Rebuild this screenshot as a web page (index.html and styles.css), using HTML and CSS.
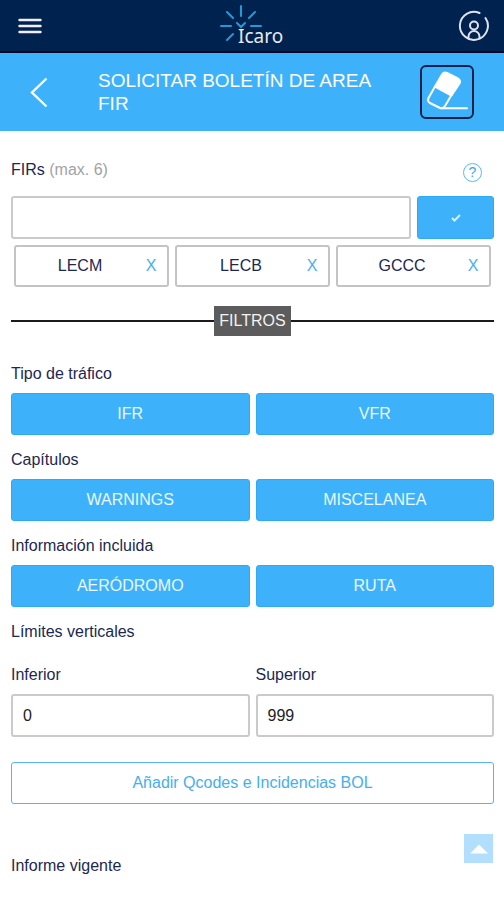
FILE: index.html
```html
<!DOCTYPE html>
<html lang="es">
<head>
<meta charset="utf-8">
<meta name="viewport" content="width=device-width, initial-scale=1">
<title>Icaro</title>
<link rel="stylesheet" href="styles.css">
</head>
<body>
<header class="topbar">
  <button class="icon-button" type="button" aria-label="Menú">
    <svg width="24" height="18" viewBox="0 0 24 18" fill="none" stroke="#f1edfb" stroke-width="2.4" stroke-linecap="round"><path d="M1.500 3h21M1.500 9h21M1.500 15h21"/></svg>
  </button>
  <a class="logo" href="#" aria-label="Icaro">
    <svg width="68" height="48" viewBox="0 -3 68 48">
      <g fill="none" stroke="#2599d6" stroke-width="2" stroke-linecap="round">
        <path d="M21 1v10M7 7l6 6M35 7l-6 6M1 21h10M31 21h10M7 35l6-6M17 18l4 4 4-4"/>
      </g>
      <text class="logo-text" x="18" y="38">Icaro</text>
    </svg>
  </a>
  <button class="icon-button" type="button" aria-label="Usuario">
    <svg width="32" height="32" viewBox="0 0 32 32" fill="none" stroke="#dfe2ee" stroke-width="2" stroke-linecap="round"><path d="M21.500 3A14 14 0 1 0 27.500 8"/><circle cx="16" cy="15.500" r="4"/><path d="M10.500 28.500v-2a5.500 5.500 0 0 1 11 0v2"/></svg>
  </button>
</header>

<div class="titlebar">
  <button class="back" type="button" aria-label="Volver">
    <svg width="18" height="31" viewBox="0 0 18 31" fill="none" stroke="#fff" stroke-width="2.4"><path d="M16.500 1.500L2 15.500l14.500 14"/></svg>
  </button>
  <h1 class="title">SOLICITAR BOLETÍN DE AREA FIR</h1>
  <button class="erase" type="button" aria-label="Borrar">
    <svg width="50" height="50" viewBox="2 2 50 50" stroke="#fff" stroke-width="2" stroke-linejoin="round" stroke-linecap="round">
      <path fill="none" d="M15 21.500L8.500 33q-1.500 3 1.500 5l10 5q3 1 5-2l6.500-11"/>
      <path fill="#fff" d="M15 21.500L22 9.500q2-3 5-1.500l11 5.500q3 2 1.500 5L31.500 30.500z"/>
      <path fill="none" d="M21 43.300h26"/>
    </svg>
  </button>
</div>

<main class="content">
  <div class="label-row">
    <label class="label" for="firs">FIRs <span class="hint">(max. 6)</span></label>
    <button class="help" type="button" aria-label="Ayuda">?</button>
  </div>
  <div class="fir-entry">
    <input class="field" id="firs" type="text">
    <button class="button confirm" type="button" aria-label="Aceptar">
      <svg width="10" height="8" viewBox="0 0 10 8" fill="none" stroke="#d9f1ff" stroke-width="2"><path d="M1 4l2.500 2.500L9 1"/></svg>
    </button>
  </div>
  <div class="chips">
    <div class="chip"><span class="chip-name">LECM</span><button class="remove" type="button" aria-label="Quitar LECM">X</button></div>
    <div class="chip"><span class="chip-name">LECB</span><button class="remove" type="button" aria-label="Quitar LECB">X</button></div>
    <div class="chip"><span class="chip-name">GCCC</span><button class="remove" type="button" aria-label="Quitar GCCC">X</button></div>
  </div>

  <div class="divider"><span class="divider-text">FILTROS</span></div>

  <h2 class="label section">Tipo de tráfico</h2>
  <div class="pair">
    <button class="button" type="button">IFR</button>
    <button class="button" type="button">VFR</button>
  </div>
  <h2 class="label section">Capítulos</h2>
  <div class="pair">
    <button class="button" type="button">WARNINGS</button>
    <button class="button" type="button">MISCELANEA</button>
  </div>
  <h2 class="label section">Información incluida</h2>
  <div class="pair">
    <button class="button" type="button">AERÓDROMO</button>
    <button class="button" type="button">RUTA</button>
  </div>
  <h2 class="label section">Límites verticales</h2>
  <div class="pair limits">
    <div class="limit">
      <label class="label" for="lower">Inferior</label>
      <input class="field" id="lower" type="text" value="0">
    </div>
    <div class="limit">
      <label class="label" for="upper">Superior</label>
      <input class="field" id="upper" type="text" value="999">
    </div>
  </div>
  <button class="button outline" type="button">Añadir Qcodes e Incidencias BOL</button>
  <h2 class="label report">Informe vigente</h2>
</main>

<button class="to-top" type="button" aria-label="Subir">
  <svg width="20" height="10" viewBox="0 0 20 10"><path fill="#fff" d="M1 9.500L10 .5l9 9z"/></svg>
</button>
</body>
</html>
```
FILE: styles.css
```css
* {
  box-sizing: border-box;
}

body {
  margin: 0;
  background: #fff;
  color: #1c2850;
  font: 16px/20px "Liberation Sans", Arial, sans-serif;
}

button {
  margin: 0;
  padding: 0;
  border: 0;
  background: none;
  color: inherit;
  font: inherit;
  cursor: pointer;
}

svg {
  display: block;
}

.topbar {
  display: grid;
  grid-template-columns: 1fr auto 1fr;
  align-items: center;
  height: 53px;
  padding: 0 14px 0 18px;
  border-bottom: 2px solid #05052f;
  background: #00224e;
}

.icon-button {
  justify-self: start;
}

.icon-button:last-child {
  justify-self: end;
}

.logo-text {
  fill: #e6e9f3;
  font: 19px "Noto Sans", sans-serif;
}

.titlebar {
  display: flex;
  align-items: center;
  height: 78px;
  padding: 0 30px;
  background: #3db2fb;
  color: #fff;
}

.back {
  flex: none;
  width: 68px;
}

.title {
  flex: 1;
  max-width: 300px;
  margin: 0;
  font-size: 19px;
  font-weight: 400;
  line-height: 23px;
}

.erase {
  flex: none;
  margin-left: auto;
  border: 2px solid #06214a;
  border-radius: 6px;
}

.content {
  display: flex;
  flex-direction: column;
  padding: 29px 10px 24px 11px;
}

.label {
  margin: 0;
  font-size: 16px;
  font-weight: 400;
  line-height: 20px;
}

.label-row {
  display: flex;
  align-items: flex-start;
  justify-content: space-between;
  height: 36px;
  padding-right: 12px;
}

.hint {
  color: #a2a2a6;
}

.help {
  width: 19px;
  height: 19px;
  margin-top: 3px;
  border: 1px solid #58b9f2;
  border-radius: 50%;
  color: #3ba8ec;
  font-size: 14px;
  line-height: 17px;
}

.fir-entry {
  display: flex;
  gap: 6px;
}

.field {
  width: 100%;
  min-width: 0;
  height: 43px;
  padding: 0 10px;
  border: 2px solid #cacaca;
  border-radius: 3px;
  background: #fff;
  color: #222;
  font: inherit;
}

.button {
  height: 42px;
  border: 1px solid #2eaaf5;
  border-radius: 3px;
  background: #3db2fb;
  color: #eaf8ff;
}

.confirm {
  display: flex;
  flex: none;
  align-items: center;
  justify-content: center;
  width: 77px;
  height: 43px;
}

.chips {
  display: grid;
  grid-template-columns: repeat(3, 1fr);
  gap: 6px;
  padding: 6px 3px 0;
}

.chip {
  display: flex;
  align-items: center;
  height: 42px;
  padding-right: 9px;
  border: 2px solid #c4c4c4;
  border-radius: 3px;
}

.chip-name {
  flex: 1;
  text-align: center;
}

.remove {
  width: 14px;
  color: #46aef2;
}

.divider {
  display: flex;
  align-items: center;
  margin: 19px 0 13px;
}

.divider::before,
.divider::after {
  flex: 1;
  height: 2px;
  background: #1b1b1b;
  content: "";
}

.divider-text {
  padding: 5px;
  background: #5c5c5c;
  color: #f2f2f2;
}

.section {
  padding: 15px 0 9px;
}

.pair {
  display: grid;
  grid-template-columns: 1fr 1fr;
  gap: 6px;
}

.limits {
  margin-top: 14px;
}

.limit {
  display: grid;
  gap: 9px;
}

.outline {
  margin-top: 25px;
  border: 1px solid #58b3f2;
  background: #fff;
  color: #46aef2;
}

.report {
  margin-top: 52px;
}

.to-top {
  position: fixed;
  right: 11px;
  bottom: 37px;
  display: flex;
  align-items: center;
  justify-content: center;
  width: 29px;
  height: 29px;
  background: #b1dffd;
}
```
